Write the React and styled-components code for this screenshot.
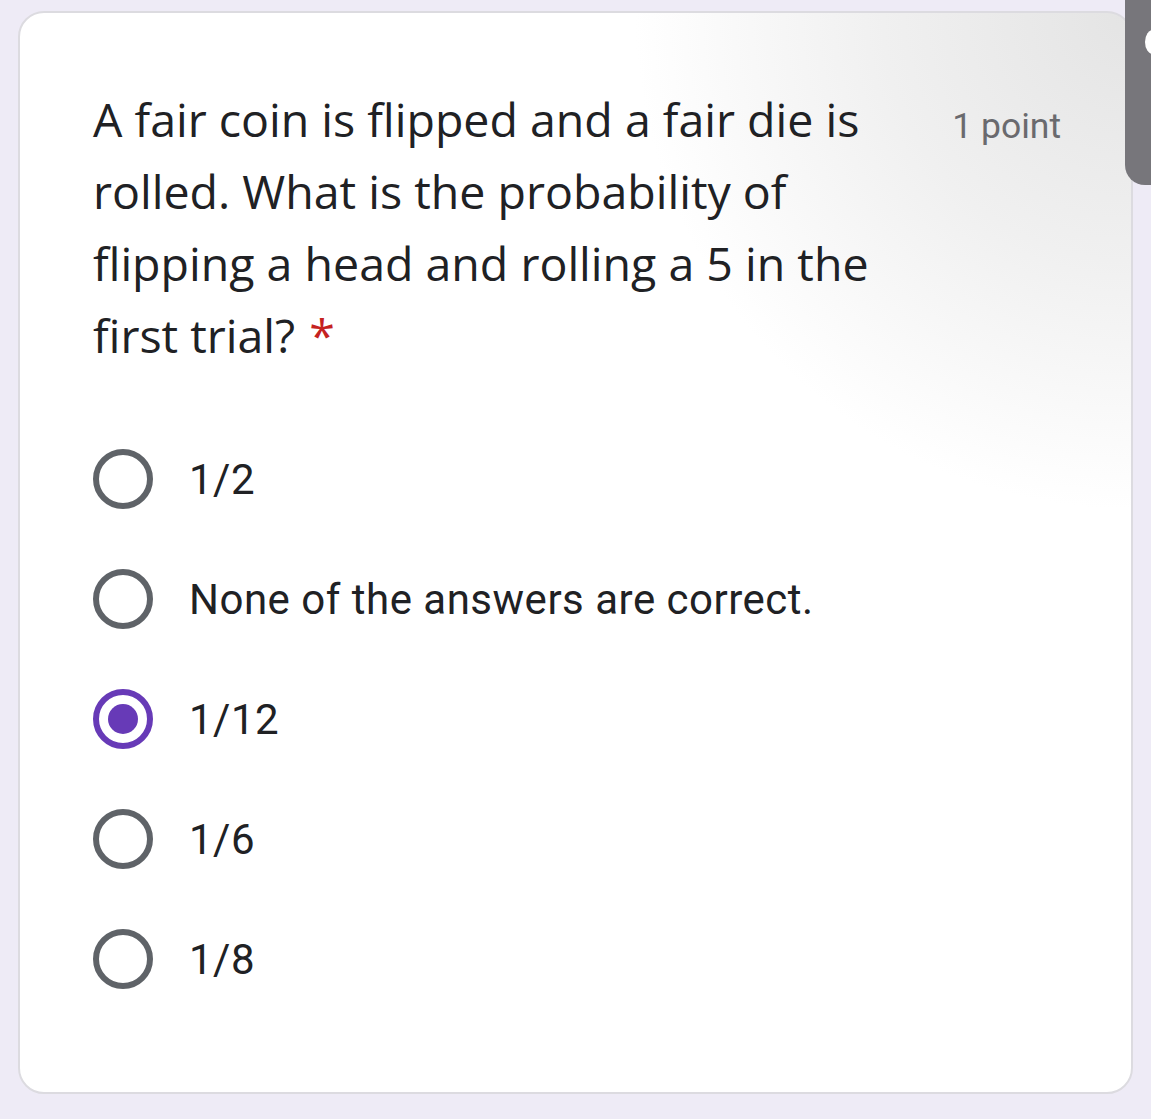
import React, { useState } from "react";
import styled, { createGlobalStyle } from "styled-components";

const GlobalStyle = createGlobalStyle`
  html, body {
    margin: 0;
    padding: 0;
    background: #eeebf6;
  }
  * {
    box-sizing: border-box;
  }
`;

const Page = styled.div`
  position: relative;
  width: 1151px;
  height: 1119px;
  padding: 11px 18px 0 18px;
  overflow: hidden;
`;

const Card = styled.div`
  width: 1115px;
  height: 1083px;
  border: 2px solid #dcdbe0;
  border-radius: 26px;
  background: radial-gradient(ellipse 620px 620px at 100% 0%, #e4e4e4 0%, #f0f0f0 40%, #ffffff 80%);
  padding: 70px 70px 0 73px;
`;

const Header = styled.div`
  display: flex;
  justify-content: space-between;
  align-items: flex-start;
`;

const Question = styled.div`
  width: 820px;
  font-family: "Open Sans", sans-serif;
  font-size: 46.5px;
  line-height: 72px;
  color: #202124;
`;

const Required = styled.span`
  color: #c5221f;
  margin-left: 14px;
`;

const Points = styled.div`
  font-family: Roboto, sans-serif;
  font-size: 35.5px;
  line-height: 72px;
  color: #6a6a6e;
  padding-top: 7px;
`;

const Options = styled.div`
  display: flex;
  flex-direction: column;
  margin-top: 48px;
`;

const Option = styled.label`
  display: flex;
  align-items: center;
  height: 120px;
  cursor: pointer;
`;

const Radio = styled.span`
  width: 60px;
  height: 60px;
  border-radius: 50%;
  border: 6px solid ${(p) => (p.checked ? "#673ab7" : "#5f6368")};
  display: flex;
  align-items: center;
  justify-content: center;
  flex-shrink: 0;

  &::after {
    content: "";
    width: 30px;
    height: 30px;
    border-radius: 50%;
    background: #673ab7;
    display: ${(p) => (p.checked ? "block" : "none")};
  }
`;

const OptionText = styled.span`
  margin-left: 36px;
  font-family: Roboto, sans-serif;
  font-size: 42px;
  color: #202124;
  letter-spacing: 0.5px;
`;

const ScrollThumb = styled.div`
  position: absolute;
  top: 0;
  right: 0;
  width: 26px;
  height: 185px;
  background: #77767b;
  border-bottom-left-radius: 20px;

  &::after {
    content: "";
    position: absolute;
    right: -10px;
    top: 30px;
    width: 16px;
    height: 24px;
    border-radius: 50%;
    background: #ffffff;
  }
`;

const answers = ["1/2", "None of the answers are correct.", "1/12", "1/6", "1/8"];

const App = () => {
  const [selected, setSelected] = useState("1/12");

  return (
    <Page>
      <GlobalStyle />
      <Card>
        <Header>
          <Question>
            A fair coin is flipped and a fair die is rolled. What is the
            probability of flipping a head and rolling a 5 in the first trial?
            <Required>*</Required>
          </Question>
          <Points>1 point</Points>
        </Header>
        <Options>
          {answers.map((a) => (
            <Option key={a} onClick={() => setSelected(a)}>
              <Radio checked={selected === a} />
              <OptionText>{a}</OptionText>
            </Option>
          ))}
        </Options>
      </Card>
      <ScrollThumb />
    </Page>
  );
};

export default App;
